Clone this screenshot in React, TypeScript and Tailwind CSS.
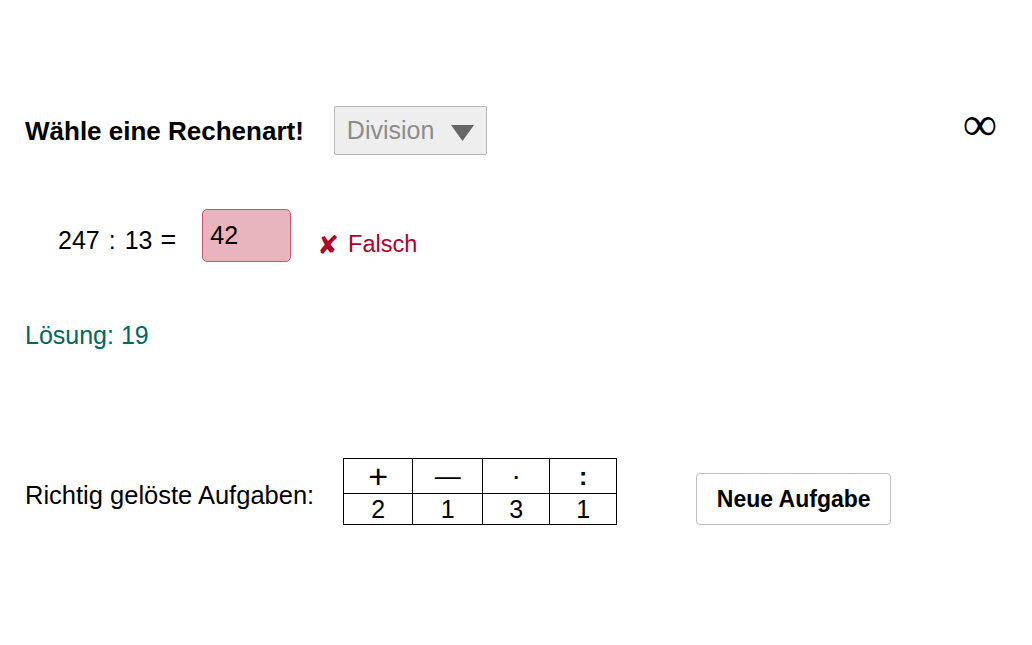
import React from "react";

export default function App() {
  const font = { fontFamily: '"Liberation Sans", Arial, sans-serif' };
  return (
    <div className="w-[1032px] h-[645px] bg-white text-black overflow-hidden" style={font}>
      <div className="flex flex-col pl-[25px]">
        {/* Row 1 */}
        <div className="mt-[106px] flex items-center h-[49px]">
          <span className="text-[26px] font-bold leading-none">Wähle eine Rechenart!</span>
          <div className="ml-[30px] w-[153px] h-[49px] bg-[#eeeeee] border border-[#b8b8b8] rounded-[2px] flex items-center pl-[12px] pr-[12px] justify-between">
            <span className="text-[25px] text-[#8c8c8c] leading-none">Division</span>
            <svg width="23" height="16" viewBox="0 0 23 16" className="mt-[4px]">
              <polygon points="0,0 23,0 11.5,16" fill="#666666" />
            </svg>
          </div>
          <span className="ml-auto mr-[35px] mb-[16px] text-[48px] leading-none font-['DejaVu_Sans'] font-light">∞</span>
        </div>

        {/* Row 2 */}
        <div className="mt-[54px] flex items-center h-[53px]">
          <span className="ml-[33px] text-[25px] leading-none pt-[9px] flex items-center">
            <span>247</span>
            <span className="ml-[9px]">:</span>
            <span className="ml-[9px]">13</span>
            <span className="ml-[8px] text-[27px]">=</span>
          </span>
          <div className="ml-[26px] w-[89px] h-[53px] bg-[#e8b4bd] border border-[#c9566a] rounded-[5px] flex items-center pl-[7px]">
            <span className="text-[25px] leading-none">42</span>
          </div>
          <span className="ml-[26px] pt-[18px] text-[23.5px] leading-none text-[#b0002a] flex items-center">
            <span className="text-[26px] font-['DejaVu_Sans'] mr-[9px]">✘</span>Falsch
          </span>
        </div>

        {/* Lösung */}
        <div className="mt-[58px] h-[30px] flex items-center">
          <span className="text-[25px] leading-none text-[#00695a]">Lösung: 19</span>
        </div>

        {/* Bottom row */}
        <div className="mt-[108px] flex items-start">
          <span className="mt-[25px] text-[25.5px] leading-none">Richtig gelöste Aufgaben:</span>
          <table className="ml-[29px] border-collapse border border-black text-[25px] leading-none">
            <tbody>
              <tr className="h-[32px]">
                <td className="w-[69px] border border-black text-center align-middle text-[34px]">+</td>
                <td className="w-[70px] border border-black text-center align-middle text-[26px]">—</td>
                <td className="w-[67px] border border-black text-center align-middle text-[28px]">·</td>
                <td className="w-[67px] border border-black text-center align-middle font-bold">:</td>
              </tr>
              <tr className="h-[31px]">
                <td className="border border-black text-center align-middle">2</td>
                <td className="border border-black text-center align-middle">1</td>
                <td className="border border-black text-center align-middle">3</td>
                <td className="border border-black text-center align-middle">1</td>
              </tr>
            </tbody>
          </table>
          <button className="ml-[79px] mt-[15px] w-[195px] h-[52px] bg-white border border-[#bdbdbd] rounded-[4px] flex items-center justify-center text-[23px] font-bold leading-none">
            Neue Aufgabe
          </button>
        </div>
      </div>
    </div>
  );
}
